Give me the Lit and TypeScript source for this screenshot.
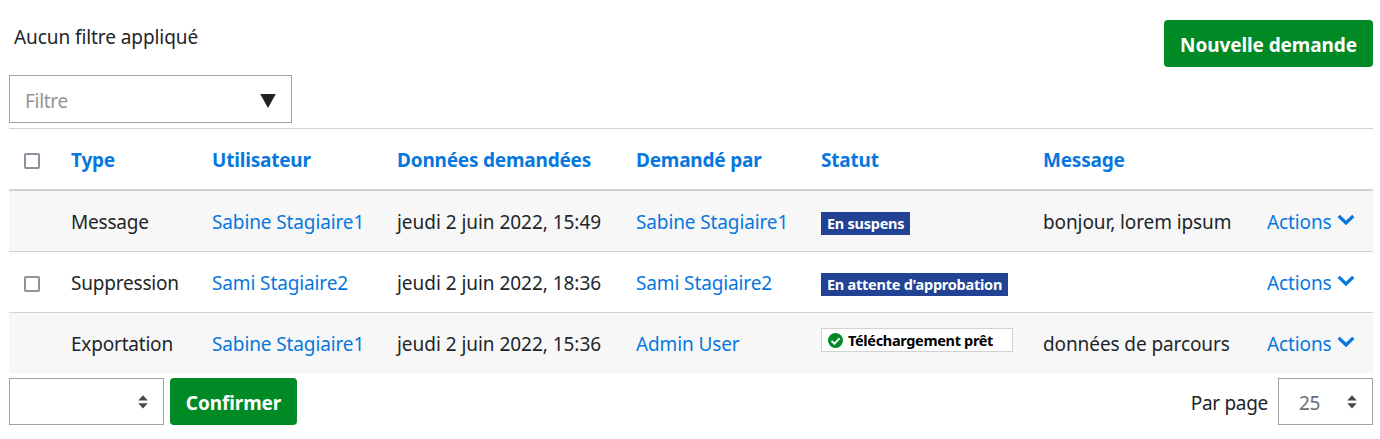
import { LitElement, html, css, nothing } from "lit";
import { customElement } from "lit/decorators.js";

interface Request {
  type: string;
  user: string;
  date: string;
  by: string;
  status: string;
  ready?: boolean;
  selectable?: boolean;
  message: string;
}

const HEADERS = ["Type", "Utilisateur", "Données demandées", "Demandé par", "Statut", "Message"];

const REQUESTS: Request[] = [
  { type: "Message", user: "Sabine Stagiaire1", date: "jeudi 2 juin 2022, 15:49", by: "Sabine Stagiaire1", status: "En suspens", message: "bonjour, lorem ipsum" },
  { type: "Suppression", user: "Sami Stagiaire2", date: "jeudi 2 juin 2022, 18:36", by: "Sami Stagiaire2", status: "En attente d'approbation", selectable: true, message: "" },
  { type: "Exportation", user: "Sabine Stagiaire1", date: "jeudi 2 juin 2022, 15:36", by: "Admin User", status: "Téléchargement prêt", ready: true, message: "données de parcours" },
];

const sorter = html`<svg class="sorter" width="10" height="14" viewBox="0 0 10 14">
  <path d="M5 0.3 L9.8 5.6 H0.2 Z M5 13.5 L9.8 8.2 H0.2 Z" fill="#464a4e" />
</svg>`;

@customElement("app-root")
export class AppRoot extends LitElement {
  static styles = css`
    :host {
      display: block;
      box-sizing: border-box;
      height: 439px;
      padding: 20px 7px 0 9px;
      background: #fff;
      color: #212529;
      font: 400 19px/28px "Noto Sans", "Open Sans", sans-serif;
      letter-spacing: -0.3px;
      white-space: nowrap;
    }
    * { box-sizing: border-box; }
    .top { display: flex; justify-content: space-between; height: 55px; }
    .none { padding: 3px 0 0 5px; letter-spacing: -0.08px; }
    .btn {
      display: flex;
      justify-content: center;
      height: 47px;
      padding-top: 11px;
      border-radius: 4px;
      background: #008a26;
      color: #fff;
      font-weight: 700;
      letter-spacing: -0.1px;
    }
    .new { width: 209px; }
    .confirm { width: 127px; margin-left: 6px; }
    .filter {
      display: flex;
      justify-content: space-between;
      width: 283px;
      height: 48px;
      padding: 11px 15px 0;
      border: 1px solid #a2a2a2;
      color: #949494;
    }
    .triangle { margin-top: 7px; }
    .table { margin-top: 5px; border-top: 1px solid #d2d2d2; }
    .row {
      display: grid;
      grid-template-columns: 47px 141px 185px 239px 185px 222px 224px 121px;
      height: 61px;
      padding-top: 17px;
      border-bottom: 1px solid #d2d2d2;
      letter-spacing: -0.12px;
    }
    .row > div { padding-left: 15px; }
    .row > .type { letter-spacing: -0.2px; }
    .row > .date { letter-spacing: -0.04px; }
    .row > .message { letter-spacing: -0.1px; }
    .row:nth-child(even) { background: #f7f7f7; }
    .row:last-child { height: 60px; border-bottom: 0; }
    .head {
      height: 62px;
      border-bottom-width: 2px;
      color: #0677df;
      font-weight: 700;
      letter-spacing: -0.2px;
    }
    .check {
      width: 16px;
      height: 16px;
      margin-top: 7px;
      border: 2px solid #8f8f9d;
      border-radius: 2px;
      background: #fff;
    }
    .link { color: #0677df; }
    .actions { display: flex; }
    .chevron { margin: 6px 0 0 5px; }
    .badge {
      display: flex;
      width: max-content;
      height: 23px;
      margin-top: 4px;
      padding: 0 6px;
      background: #224394;
      color: #fff;
      font-size: 14.5px;
      font-weight: 700;
      line-height: 23px;
      letter-spacing: -0.25px;
    }
    .ready {
      width: 192px;
      height: 24px;
      margin-top: -2px;
      border: 1px solid #d2d2d2;
      background: #fff;
      color: #000;
      letter-spacing: -0.33px;
    }
    .tick { margin: 4px 5px 0 0; }
    .bottom { display: flex; padding-top: 5px; }
    .select {
      display: flex;
      justify-content: flex-end;
      height: 47px;
      padding: 10px 15px 0 0;
      border: 1px solid #a2a2a2;
      color: #6a6f75;
    }
    .bulk { width: 155px; }
    .count { width: 95px; justify-content: space-between; padding-left: 20px; }
    .sorter { margin-top: 6px; }
    .label { margin: 11px 10px 0 auto; }
  `;

  private renderRow(r: Request) {
    return html`<div class="row">
      <div>${r.selectable ? html`<div class="check"></div>` : nothing}</div>
      <div class="type"><span>${r.type}</span></div>
      <div class="link"><span>${r.user}</span></div>
      <div class="date"><span>${r.date}</span></div>
      <div class="link"><span>${r.by}</span></div>
      <div>
        <div class="badge ${r.ready ? "ready" : ""}">
          ${r.ready
            ? html`<svg class="tick" width="15" height="15" viewBox="0 0 16 16">
                <circle cx="8" cy="8" r="8" fill="#008a26" />
                <path d="M3.7 8.4 L6.8 11.3 L12.4 5.7" fill="none" stroke="#fff" stroke-width="2.1" />
              </svg>`
            : nothing}<span>${r.status}</span>
        </div>
      </div>
      <div class="message"><span>${r.message}</span></div>
      <div class="link actions">
        <span>Actions</span>
        <svg class="chevron" width="18" height="12" viewBox="0 0 18 12">
          <path d="M1.7 1.8 L9 9 L16.3 1.8" fill="none" stroke="currentColor" stroke-width="3.2" />
        </svg>
      </div>
    </div>`;
  }

  render() {
    return html`
      <div class="top">
        <div class="none"><span>Aucun filtre appliqué</span></div>
        <div class="btn new"><span>Nouvelle demande</span></div>
      </div>
      <div class="filter">
        <span>Filtre</span>
        <svg class="triangle" width="16" height="14" viewBox="0 0 16 14">
          <path d="M0.2 0 H15.8 L8 14 Z" fill="#222" />
        </svg>
      </div>
      <div class="table">
        <div class="row head">
          <div><div class="check"></div></div>
          ${HEADERS.map((h) => html`<div><span>${h}</span></div>`)}
        </div>
        ${REQUESTS.map((r) => this.renderRow(r))}
      </div>
      <div class="bottom">
        <div class="select bulk">${sorter}</div>
        <div class="btn confirm"><span>Confirmer</span></div>
        <div class="label">Par page</div>
        <div class="select count"><span>25</span>${sorter}</div>
      </div>
    `;
  }
}
